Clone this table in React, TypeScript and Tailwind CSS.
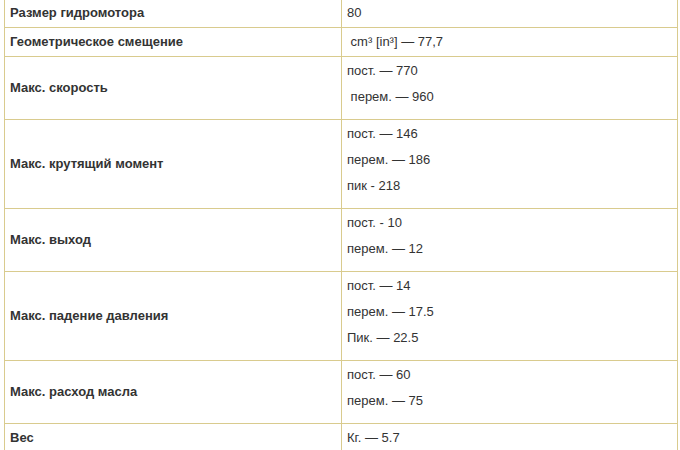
const rows: { label: string; values: string[]; single?: boolean }[] = [
  { label: 'Размер гидромотора', values: ['80'], single: true },
  { label: 'Геометрическое смещение', values: ['\u00a0cm³ [in³] — 77,7'], single: true },
  { label: 'Макс. скорость', values: ['пост. — 770', '\u00a0перем. — 960'] },
  { label: 'Макс. крутящий момент', values: ['пост. — 146', 'перем. — 186', 'пик - 218'] },
  { label: 'Макс. выход', values: ['пост. - 10', 'перем. — 12'] },
  { label: 'Макс. падение давления', values: ['пост. — 14', 'перем. — 17.5', 'Пик. — 22.5'] },
  { label: 'Макс. расход масла', values: ['пост. — 60', 'перем. — 75'] },
  { label: 'Вес', values: ['Кг. — 5.7'], single: true },
];

export default function App() {
  return (
    <div className="w-[680px] h-[450px] overflow-hidden bg-white pl-[4px] font-['Liberation_Sans',Arial,sans-serif] text-[13px] text-[#333]">
      <table className="-mt-[2px] w-[674px] table-fixed border-collapse">
        <colgroup>
          <col className="w-[337px]" />
          <col />
        </colgroup>
        <tbody>
          {rows.map((row) => (
            <tr key={row.label}>
              <td className="border border-[#d9cb8e] px-[5px] py-[5px] align-middle font-bold leading-[18px]">
                {row.label}
              </td>
              <td className="border border-[#d9cb8e] px-[5px] py-[5px] align-top leading-[18px]">
                {row.single ? (
                  row.values[0]
                ) : (
                  row.values.map((v) => (
                    <p key={v} className="mb-2">
                      {v}
                    </p>
                  ))
                )}
              </td>
            </tr>
          ))}
        </tbody>
      </table>
    </div>
  );
}
